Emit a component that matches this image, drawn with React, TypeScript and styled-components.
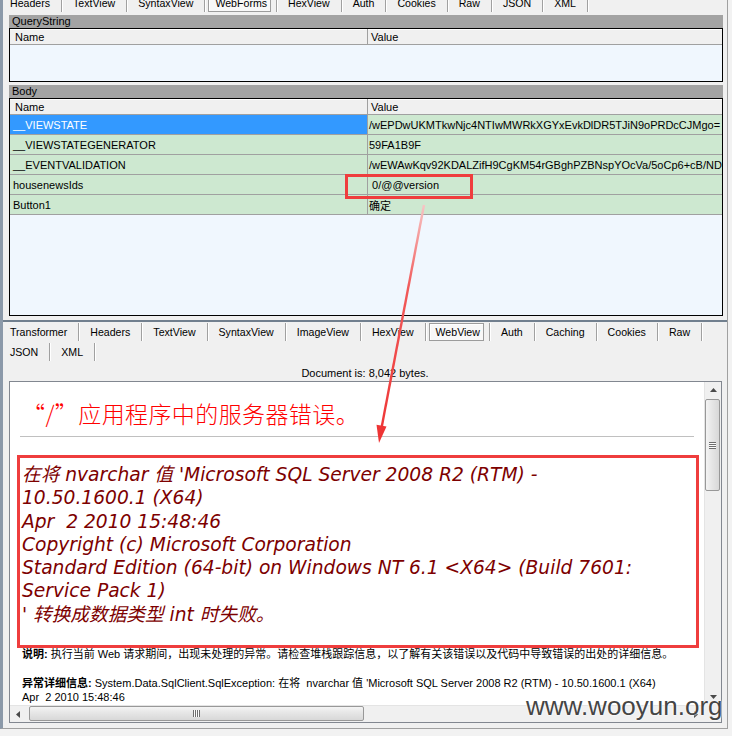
import React from 'react'
import styled, { createGlobalStyle } from 'styled-components'

const upperTabs = ['Headers', 'TextView', 'SyntaxView', 'WebForms', 'HexView', 'Auth', 'Cookies', 'Raw', 'JSON', 'XML']
const lowerTabs = [
  ['Transformer', 'Headers', 'TextView', 'SyntaxView', 'ImageView', 'HexView', 'WebView', 'Auth', 'Caching', 'Cookies', 'Raw'],
  ['JSON', 'XML'],
]

const bodyRows = [
  { name: '__VIEWSTATE', value: '/wEPDwUKMTkwNjc4NTIwMWRkXGYxEvkDlDR5TJiN9oPRDcCJMgo=', selected: true },
  { name: '__VIEWSTATEGENERATOR', value: '59FA1B9F' },
  { name: '__EVENTVALIDATION', value: '/wEWAwKqv92KDALZifH9CgKM54rGBghPZBNspYOcVa/5oCp6+cB/NDlD' },
  { name: 'housenewsIds', value: '\u00a00/@@version' },
  { name: 'Button1', value: '确定' },
]

const messageLines = [
  "在将 nvarchar 值 'Microsoft SQL Server 2008 R2 (RTM) -",
  '10.50.1600.1 (X64)',
  'Apr \u00a02 2010 15:48:46',
  'Copyright (c) Microsoft Corporation',
  'Standard Edition (64-bit) on Windows NT 6.1 <X64> (Build 7601:',
  'Service Pack 1)',
  "' 转换成数据类型 int 时失败。",
]

type Dir = 'up' | 'down' | 'left' | 'right'

const Arrow: React.FC<{ dir: Dir }> = ({ dir }) => {
  const vertical = dir === 'up' || dir === 'down'
  const points = {
    up: '0,4 3.5,0 7,4',
    down: '0,0 7,0 3.5,4',
    left: '4,0 4,7 0,3.5',
    right: '0,0 0,7 4,3.5',
  }[dir]
  return (
    <svg width={vertical ? 7 : 4} height={vertical ? 4 : 7} viewBox={vertical ? '0 0 7 4' : '0 0 4 7'}>
      <polygon points={points} fill='#4a4a4a' />
    </svg>
  )
}

const TabRow: React.FC<{ tabs: string[], active: string }> = ({ tabs, active }) => (
  <TabLine>
    {tabs.map(tab => (
      <Tab key={tab} $active={tab === active}>
        <TabLabel $active={tab === active}>{tab}</TabLabel>
      </Tab>
    ))}
  </TabLine>
)

const App: React.FC = () => {
  return (
    <Window>
      <GlobalStyle />
      <Frame>
        <UpperPane>
          <TopTabs>
            <TabRow tabs={upperTabs} active='WebForms' />
          </TopTabs>

          <SectionBar>QueryString</SectionBar>
          <Grid $height={54}>
            <Row $header>
              <Cell $header $first>Name</Cell>
              <Cell $header>Value</Cell>
            </Row>
          </Grid>

          <SectionBar $gap={3}>Body</SectionBar>
          <Grid $height={218}>
            <Row $header>
              <Cell $header $first>Name</Cell>
              <Cell $header>Value</Cell>
            </Row>
            {bodyRows.map(row => (
              <Row key={row.name}>
                <Cell $first $selected={row.selected}>{row.name}</Cell>
                <Cell>{row.value}</Cell>
              </Row>
            ))}
          </Grid>
        </UpperPane>

        <Splitter />

        <LowerPane>
          {lowerTabs.map((tabs, i) => (
            <TabRow key={i} tabs={tabs} active='WebView' />
          ))}
          <DocInfo>Document is: 8,042 bytes.</DocInfo>

          <ContentBox>
            <Viewport>
              <ErrorTitle>“/”应用程序中的服务器错误。</ErrorTitle>
              <Rule />
              <Message>
                {messageLines.map((line, i) => (
                  <div key={i}>{line}</div>
                ))}
              </Message>
              <Para $gap={21}>
                <b>说明:</b> 执行当前 Web 请求期间，出现未处理的异常。请检查堆栈跟踪信息，以了解有关该错误以及代码中导致错误的出处的详细信息。
              </Para>
              <Para $gap={15}>
                <b>异常详细信息:</b> System.Data.SqlClient.SqlException: 在将 &nbsp;nvarchar 值 'Microsoft SQL Server 2008 R2 (RTM) - 10.50.1600.1 (X64)
                <br />
                Apr &nbsp;2 2010 15:48:46
              </Para>
            </Viewport>

            <VScroll>
              <ScrollButton><Arrow dir='up' /></ScrollButton>
              <VThumb><Grip $vertical /></VThumb>
              <Track />
              <ScrollButton><Arrow dir='down' /></ScrollButton>
            </VScroll>

            <HScroll>
              <ScrollButton><Arrow dir='left' /></ScrollButton>
              <HThumb><Grip /></HThumb>
              <Track />
              <ScrollButton><Arrow dir='right' /></ScrollButton>
            </HScroll>

            <Corner />
          </ContentBox>
        </LowerPane>
      </Frame>

      <FieldHighlight />
      <MessageHighlight />

      <PointerArrow viewBox='0 0 732 736'>
        <defs>
          <linearGradient id='arrowFade' x1='0' y1='205' x2='0' y2='440' gradientUnits='userSpaceOnUse'>
            <stop offset='0' stopColor='#f7c4c4' />
            <stop offset='0.35' stopColor='#f15a5a' />
            <stop offset='1' stopColor='#ee3434' />
          </linearGradient>
        </defs>
        <line x1='424' y1='205' x2='381.5' y2='428' stroke='url(#arrowFade)' strokeWidth='2.4' />
        <polygon points='379,443 386.5,426.5 376.5,424.8' fill='#ee3434' />
      </PointerArrow>

      <Watermark>www.wooyun.org</Watermark>
    </Window>
  )
}

const GlobalStyle = createGlobalStyle`
  html, body {
    margin: 0;
    padding: 0;
  }
  body {
    background: #f0f0f0;
    font-family: 'Liberation Sans', 'Noto Sans CJK SC', sans-serif;
    font-size: 11px;
    color: #000;
  }
`

const Window = styled.div`
  position: relative;
  width: 732px;
  height: 736px;
  overflow: hidden;
  background: #f2f2f2;
`

const Frame = styled.div`
  width: 724px;
  height: 728px;
  border-left: 3px solid #8b99a9;
  border-right: 1px solid #a0a0a0;
  border-bottom: 1px solid #a0a0a0;
  background: #f0f0f0;
  display: flex;
  flex-direction: column;
`

const UpperPane = styled.div`
  height: 320px;
  flex: none;
  display: flex;
  flex-direction: column;
  overflow: hidden;
`

const TopTabs = styled.div`
  margin-top: -7px;
`

const TabLine = styled.div`
  display: flex;
  height: 20px;
  flex: none;
  font-size: 10.6px;
`

const Tab = styled.div<{ $active?: boolean }>`
  display: flex;
  align-items: center;
  height: 18px;
  margin-top: 1px;
  padding: ${p => (p.$active ? '0 5px 0 3px' : '0 11px')};
  border-right: 1px solid #a0a0a0;
  box-shadow: 1px 0 0 #fff;
  white-space: nowrap;

  &:first-child {
    padding-left: 7px;
  }
`

const TabLabel = styled.span<{ $active?: boolean }>`
  display: flex;
  align-items: center;
  height: ${p => (p.$active ? '16px' : 'auto')};
  padding: ${p => (p.$active ? '0 3px 0 6px' : '0')};
  border: ${p => (p.$active ? '1px solid #9c9c9c' : 'none')};
  background: ${p => (p.$active ? '#f8f8f8' : 'transparent')};
  box-shadow: ${p => (p.$active ? 'inset 1px 1px 0 #fff' : 'none')};
`

const SectionBar = styled.div<{ $gap?: number }>`
  margin: ${p => p.$gap ?? 2}px 4px 0 6px;
  height: 13px;
  line-height: 13px;
  padding-left: 3px;
  background: #a3a3a3;
  flex: none;
`

const Grid = styled.div<{ $height: number }>`
  margin: 0 4px 0 6px;
  height: ${p => p.$height}px;
  box-sizing: border-box;
  border: 1px solid #000;
  background: #f0f7fe;
  flex: none;
  display: flex;
  flex-direction: column;
  overflow: hidden;
`

const Row = styled.div<{ $header?: boolean }>`
  display: grid;
  grid-template-columns: 358px 1fr;
  height: ${p => (p.$header ? 16 : 20)}px;
  flex: none;
  box-sizing: border-box;
  border-bottom: 1px solid #a0a0a0;
  background: ${p => (p.$header ? '#f0f0f0' : '#cde8d0')};
  box-shadow: ${p => (p.$header ? 'inset 0 1px 0 #fff' : 'none')};
`

const Cell = styled.div<{ $header?: boolean, $first?: boolean, $selected?: boolean }>`
  display: flex;
  align-items: center;
  box-sizing: border-box;
  padding-left: ${p => (p.$header ? (p.$first ? 5 : 3) : (p.$first ? 3 : 1))}px;
  border-right: ${p => (p.$first ? '1px solid #a0a0a0' : 'none')};
  background: ${p => (p.$selected ? '#3399ff' : 'transparent')};
  color: ${p => (p.$selected ? '#fff' : '#000')};
  white-space: nowrap;
  overflow: hidden;
`

const Splitter = styled.div`
  height: 2px;
  flex: none;
  background: #717f8e;
`

const LowerPane = styled.div`
  flex: 1;
  display: flex;
  flex-direction: column;
`

const DocInfo = styled.div`
  height: 19px;
  padding-top: 4px;
  box-sizing: border-box;
  line-height: 14px;
  text-align: center;
  flex: none;
`

const ContentBox = styled.div`
  margin: 0 5px 0 6px;
  height: 342px;
  flex: none;
  box-sizing: border-box;
  border: 1px solid #828790;
  display: grid;
  grid-template-columns: 1fr 17px;
  grid-template-rows: 1fr 17px;
  overflow: hidden;
`

const Viewport = styled.div`
  background: #fff;
  padding: 0 10px 0 12px;
  overflow: hidden;
  min-width: 0;
  min-height: 0;
`

const ErrorTitle = styled.div`
  margin-top: 16px;
  font-family: 'Noto Sans CJK SC', sans-serif;
  font-size: 23px;
  font-weight: 300;
  letter-spacing: 0.4px;
  line-height: 30px;
  color: #ff0000;
  white-space: nowrap;
`

const Rule = styled.div`
  margin: 8px 0 0 -2px;
  border-top: 1px solid #c0c0c0;
`

const Message = styled.div`
  margin-top: 26px;
  font-family: 'DejaVu Sans', 'Noto Sans CJK SC', sans-serif;
  font-style: italic;
  font-size: 18.67px;
  line-height: 23.3px;
  color: #7d0000;
  white-space: nowrap;
`

const Para = styled.div<{ $gap: number }>`
  margin-top: ${p => p.$gap}px;
  font-family: 'Liberation Sans', 'Noto Sans CJK SC', sans-serif;
  font-size: 11px;
  line-height: 14px;
  white-space: nowrap;
`

const VScroll = styled.div`
  display: flex;
  flex-direction: column;
  background: #f0f0f0;
  border-left: 1px solid #e4e4e4;
  box-sizing: border-box;
`

const HScroll = styled.div`
  display: flex;
  background: #f0f0f0;
  border-top: 1px solid #e4e4e4;
  box-sizing: border-box;
`

const ScrollButton = styled.div`
  width: 16px;
  height: 16px;
  flex: none;
  display: flex;
  align-items: center;
  justify-content: center;
`

const Track = styled.div`
  flex: 1;
`

const VThumb = styled.div`
  margin: 1px 1px 0 0;
  height: 92px;
  flex: none;
  box-sizing: border-box;
  border: 1px solid #989898;
  border-radius: 2px;
  background: linear-gradient(to right, #f4f4f4, #e6e6e6 45%, #d8d8d8);
  display: flex;
  align-items: center;
  justify-content: center;
`

const HThumb = styled.div`
  margin: 0 0 1px 3px;
  width: 335px;
  flex: none;
  box-sizing: border-box;
  border: 1px solid #989898;
  border-radius: 2px;
  background: linear-gradient(to bottom, #f4f4f4, #e6e6e6 45%, #d8d8d8);
  display: flex;
  align-items: center;
  justify-content: center;
`

const Grip = styled.div<{ $vertical?: boolean }>`
  width: 7px;
  height: 7px;
  background: ${p => (p.$vertical
    ? 'repeating-linear-gradient(to bottom, #6e6e6e 0 1px, #fbfbfb 1px 2px)'
    : 'repeating-linear-gradient(to right, #6e6e6e 0 1px, #fbfbfb 1px 2px)')};
`

const Corner = styled.div`
  background: #f0f0f0;
`

const FieldHighlight = styled.div`
  position: absolute;
  left: 345px;
  top: 174px;
  width: 128px;
  height: 25px;
  box-sizing: border-box;
  border: 3px solid #ef3d3d;
  pointer-events: none;
`

const MessageHighlight = styled.div`
  position: absolute;
  left: 17px;
  top: 455px;
  width: 682px;
  height: 193px;
  box-sizing: border-box;
  border: 3px solid #ef3d3d;
  pointer-events: none;
`

const PointerArrow = styled.svg`
  position: absolute;
  left: 0;
  top: 0;
  width: 732px;
  height: 736px;
  pointer-events: none;
`

const Watermark = styled.div`
  position: absolute;
  left: 526px;
  top: 692px;
  font-family: 'Liberation Sans', sans-serif;
  font-size: 26px;
  line-height: 28px;
  color: #454545;
  text-shadow: 0 0 2px #fff, 0 0 2px #fff;
  pointer-events: none;
  white-space: nowrap;
`

export default App
